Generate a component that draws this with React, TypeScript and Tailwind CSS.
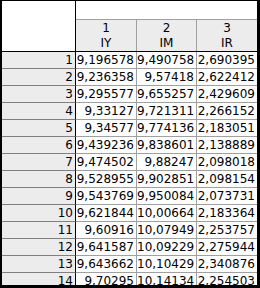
import React from "react";

const rows: [string, string, string][] = [
  ["9,196578", "9,490758", "2,690395"],
  ["9,236358", "9,57418", "2,622412"],
  ["9,295577", "9,655257", "2,429609"],
  ["9,33127", "9,721311", "2,266152"],
  ["9,34577", "9,774136", "2,183051"],
  ["9,439236", "9,838601", "2,138889"],
  ["9,474502", "9,88247", "2,098018"],
  ["9,528955", "9,902851", "2,098154"],
  ["9,543769", "9,950084", "2,073731"],
  ["9,621844", "10,00664", "2,183364"],
  ["9,60916", "10,07949", "2,253757"],
  ["9,641587", "10,09229", "2,275944"],
  ["9,643662", "10,10429", "2,340876"],
  ["9,70295", "10,14134", "2,254503"],
];

const cols = [
  { n: "1", l: "IY" },
  { n: "2", l: "IM" },
  { n: "3", l: "IR" },
];

export default function App() {
  return (
    <div
      className="w-[260px] h-[288px] overflow-hidden bg-white border-t border-l-2 border-r-[3px] border-b-[3px] border-black text-black text-[12px]"
      style={{ fontFamily: '"DejaVu Sans", sans-serif' }}
    >
      <div className="flex h-[51px] border-b border-black">
        <div className="w-[74px] shrink-0 border-r border-black bg-white" />
        <div className="flex-1 flex flex-col">
          <div className="h-[19px] border-b border-[#a0a0a0] bg-white" />
          <div className="flex h-[31px]">
            {cols.map((c, i) => (
              <div
                key={c.n}
                className={`flex flex-col items-center justify-center bg-[#ececec] leading-[15px] ${
                  i === 0 ? "w-[61px] border-r border-[#a0a0a0]" : i === 1 ? "w-[60px] border-r border-[#a0a0a0]" : "w-[60px]"
                }`}
              >
                <span>{c.n}</span>
                <span>{c.l}</span>
              </div>
            ))}
          </div>
        </div>
      </div>
      {rows.map((r, idx) => (
        <div key={idx} className="flex h-[17px]">
          <div className="w-[74px] shrink-0 border-r border-black border-b border-b-[#808080] bg-[#ececec] text-right pr-[2px] leading-[16px]">
            {idx + 1}
          </div>
          <div className="w-[61px] border-r border-b border-[#a0a0a0] text-right pr-[2px] leading-[16px]">
            {r[0]}
          </div>
          <div className="w-[60px] border-r border-b border-[#a0a0a0] text-right pr-[2px] leading-[16px]">
            {r[1]}
          </div>
          <div className="w-[60px] border-b border-[#a0a0a0] text-right pr-[2px] leading-[16px]">
            {r[2]}
          </div>
        </div>
      ))}
    </div>
  );
}
